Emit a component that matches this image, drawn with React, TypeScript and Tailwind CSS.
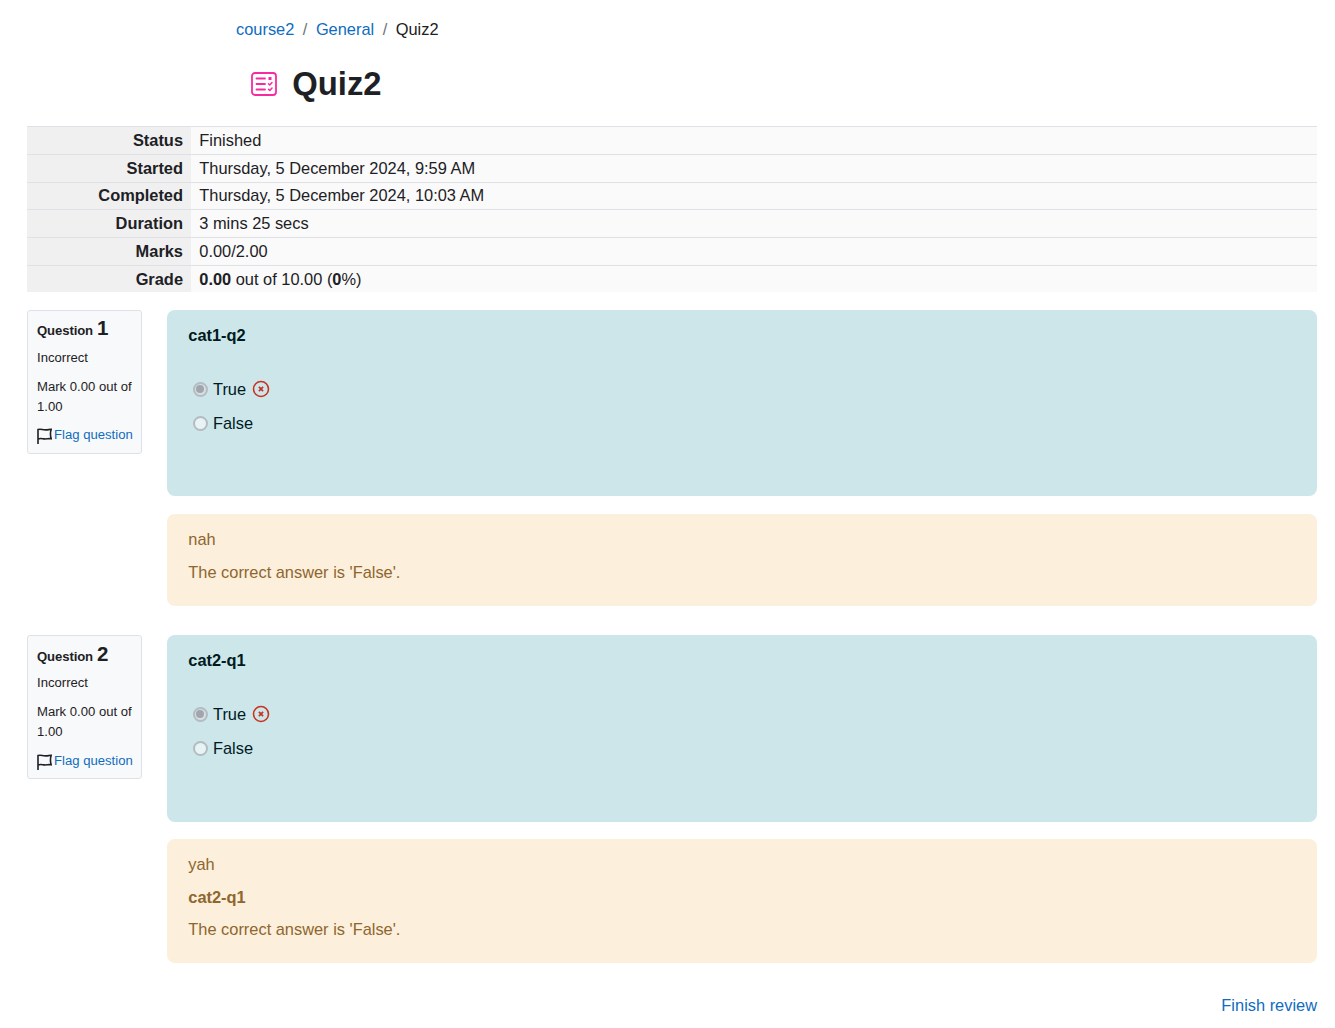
import React from "react";

const rows: [string, React.ReactNode][] = [
  ["Status", "Finished"],
  ["Started", "Thursday, 5 December 2024, 9:59 AM"],
  ["Completed", "Thursday, 5 December 2024, 10:03 AM"],
  ["Duration", "3 mins 25 secs"],
  ["Marks", "0.00/2.00"],
  ["Grade", <><b>0.00</b> out of 10.00 (<b>0</b>%)</>],
];

function QuizIcon() {
  return (
    <svg width="26" height="24" viewBox="0 0 26 24" fill="none" stroke="#f72ba0" strokeWidth="1.8" strokeLinecap="round" strokeLinejoin="round">
      <rect x="1" y="1" width="24" height="22" rx="3" />
      <path d="M5.500 6.500h8.500M5.500 12h8.500M5.500 17.500h8.500" />
      <rect x="17.500" y="5" width="3" height="3" fill="#f72ba0" stroke="none" />
      <path d="M17.500 11.800l1.300 1.200 2.200-2.400M17.500 17.300l1.300 1.200 2.200-2.400" strokeWidth="1.500" />
    </svg>
  );
}

function Flag() {
  return (
    <svg width="15" height="16" viewBox="0 0 15 16" fill="none" stroke="#1d2125" strokeWidth="1.600" className="shrink-0">
      <path d="M1 16V1.500C3.500.8 5 1.600 7.500 1.800c2.500.2 4-.3 6.700-.5-.8 2.500-.8 7 0 9.500-2.700-.5-4.200.3-6.700.1C5 10.700 3.500 10 1 11" />
    </svg>
  );
}

function XMark() {
  return (
    <svg width="18" height="18" viewBox="0 0 18 18" fill="none" stroke="#ca3120" className="ml-[5.500px]">
      <circle cx="9" cy="9" r="7.5" strokeWidth="1.600" />
      <path d="M6.900 6.900l4.200 4.200M11.100 6.900l-4.200 4.200" strokeWidth="1.700" />
    </svg>
  );
}

function Radio({ checked }: { checked?: boolean }) {
  return (
    <span className={`w-[15px] h-[15px] rounded-full border-2 border-[#b4bcc2] flex items-center justify-center shrink-0 ${checked ? "bg-[#d8dee2]" : "bg-[#e8f3f5]"}`}>
      {checked && <span className="w-[8px] h-[8px] rounded-full bg-[#a0a6b0]" />}
    </span>
  );
}

function Question({ n, title, contentH, feedback, mb, gap, second }: { n: number; title: string; contentH: string; feedback: React.ReactNode; mb: string; gap: string; second?: boolean }) {
  return (
    <div className={`flex ${mb}`}>
      <div className={`w-[115px] shrink-0 self-start h-[144px] bg-[#f8f9fa] border border-[#dee2e6] rounded-[3px] pl-[9px] text-[13.12px] leading-[20px] text-[#1d2125] ${second ? "pt-[8px]" : "pt-[7px]"}`}>
        <div className="h-[24px] flex items-baseline font-bold whitespace-nowrap tracking-[-0.1px]">
          Question<span className="text-[20.5px] ml-1">{n}</span>
        </div>
        <div className={second ? "mt-[5px]" : "mt-[6px]"}>Incorrect</div>
        <div className="mt-[9px] pr-1">Mark 0.00 out of 1.00</div>
        <div className={`flex items-start gap-[2px] whitespace-nowrap ${second ? "mt-[9px]" : "mt-[8px]"}`}>
          <span className="mt-[3px]"><Flag /></span>
          <span className="text-[#0f6cbf]">Flag question</span>
        </div>
      </div>
      <div className="ml-[25px] flex-1 flex flex-col">
        <div className={`${contentH} bg-[#cce6ea] rounded-lg pl-[21.3px] pt-[13px] text-[#001a1e]`}>
          <div className="font-bold leading-6">{title}</div>
          <div className="mt-[30px] pl-[4.700px] flex items-center h-[24px]">
            <Radio checked />
            <span className="ml-[5px]">True</span>
            <XMark />
          </div>
          <div className="mt-[10px] pl-[4.700px] flex items-center h-[24px]">
            <Radio />
            <span className="ml-[5px]">False</span>
          </div>
        </div>
        <div className={`${gap} bg-[#fcefdc] rounded-lg pl-[21.3px] pt-[13px] pb-[22px] text-[#8e662e]`}>{feedback}</div>
      </div>
    </div>
  );
}

export default function App() {
  return (
    <div className="min-h-[1028px] bg-white text-[#1d2125] text-[16.406px] font-['Liberation_Sans',Arial,sans-serif]">
      <div className="pl-[236px] pt-[17px] h-[42px] flex leading-6">
        <span className="text-[#0f6cbf]">course2</span>
        <span className="mx-[8.500px] text-[#6a737b]">/</span>
        <span className="text-[#0f6cbf]">General</span>
        <span className="mx-[8.500px] text-[#6a737b]">/</span>
        <span>Quiz2</span>
      </div>
      <div className="pl-[251px] mt-[2px] h-[80px] flex items-center">
        <QuizIcon />
        <h1 className="ml-[15.300px] text-[32.8px] font-bold leading-[38px]">Quiz2</h1>
      </div>
      <div className="mt-[2px] mx-[27px] w-[1290px]">
        <div className="border-t border-[#dee2e6]">
          {rows.map(([k, v], i) => (
            <div key={k} className={`flex leading-[26.6px] ${i < 5 ? "h-[27.75px] border-b border-[#dee2e6]" : "h-[26.5px]"}`}>
              <div className={`w-[164px] shrink-0 bg-[#f0f0f0] text-right pr-2 font-bold ${i === 2 ? "leading-[25.5px]" : ""}`}>{k}</div>
              <div className={`flex-1 bg-[#fafafa] pl-[8.300px] ${i === 2 ? "leading-[25.5px]" : ""}`}>{v}</div>
            </div>
          ))}
        </div>
        <div className="mt-[18px]">
          <Question
            n={1}
            title="cat1-q2"
            contentH="h-[186px]"
            gap="mt-[18px]"
            mb="mb-[29px]"
            feedback={<><div className="leading-6">nah</div><div className="mt-[9px] leading-6">The correct answer is 'False'.</div></>}
          />
          <Question
            n={2}
            title="cat2-q1"
            contentH="h-[187px]"
            gap="mt-[17px]"
            mb="mb-[30px]"
            second
            feedback={<><div className="leading-6">yah</div><div className="mt-[9px] leading-6 font-bold">cat2-q1</div><div className="mt-[8px] leading-6">The correct answer is 'False'.</div></>}
          />
        </div>
        <div className="text-right text-[#0f6cbf] leading-6">Finish review</div>
      </div>
    </div>
  );
}
